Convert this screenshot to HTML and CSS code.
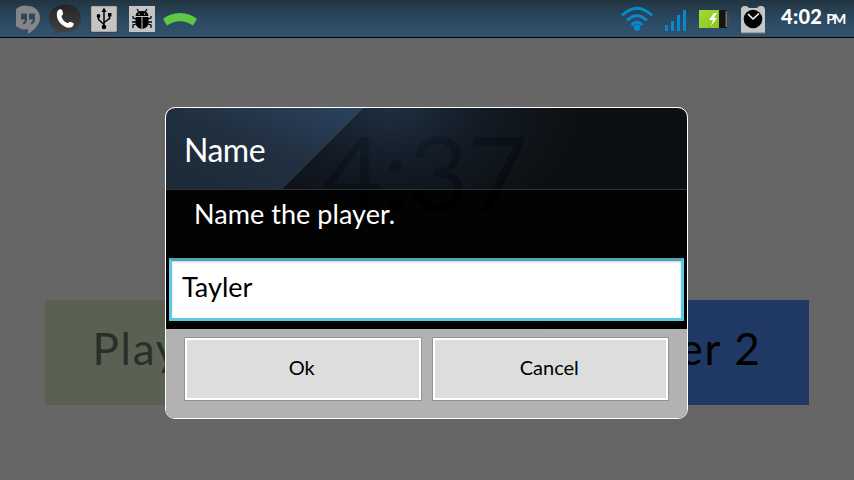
FILE: index.html
```html
<!DOCTYPE html>
<html lang="en">
<head>
<meta charset="utf-8">
<title>Game timer</title>
<link rel="stylesheet" href="styles.css">
</head>
<body>
<header class="status">
  <div class="notifications">
    <svg width="24" height="30" viewBox="0 0 24 30"><path d="M12 1a12 12 0 1 0 0 23v5c5-3 12-9 12-16C24 6 19 1 12 1z" fill="#858585"/><path d="M5 8.500h6v6q0 4-4 5v-2q2-1 2-3H5zm8 0h6v6q0 4-4 5v-2q2-1 2-3h-4z" fill="#30485d"/></svg>
    <svg class="talk" width="34" height="32" viewBox="0 0 34 32"><defs><linearGradient id="bubble" x2="0" y2="1"><stop stop-color="#242424"/><stop offset="1" stop-color="#444"/></linearGradient></defs><path d="M17 .5C7 .5 1 7 1 14.500c0 5 2 8 6 11L6 31l7-3.200c12 2 20-4 20-13.300C33 6 26 .5 17 .5z" fill="url(#bubble)"/><path d="M9.500 7c2-2.500 4-2.500 5 0l.6 3c0 1-2 1.500-1.500 3 1 3 3 5 5.500 6 1.500.3 2-1.500 3.400-1.300l3 1.600c1 1-.5 3.200-2 4-3.500 1.600-8.500-1-11.500-4.300C9 15.500 8 10 9.500 7z" fill="#fff"/></svg>
    <svg class="usb" width="28" height="28" viewBox="0 0 28 28"><rect x=".7" y=".7" width="26.600" height="26.600" rx="1.500" fill="#c4c4c4" stroke="#383838"/><path d="M14 5v17M8.500 11v3.500l5.500 5M19.500 9v4.500l-5.500 4" fill="none" stroke="#000" stroke-width="1.500"/><path d="M14 2.500 16.500 7h-5zM18 8h3.500v3.500H18z"/><circle cx="8.500" cy="11" r="1.900"/><circle cx="14" cy="22" r="2.300"/></svg>
    <svg class="bug" width="26" height="26" viewBox="0 0 26 26"><rect width="26" height="26" fill="#c4c4c4"/><path d="M6.500 10q.5-5 6.500-5t6.500 5zM6.500 11h6v12q-6-1.500-6-7zM13.500 11h6v5q0 5.500-6 7z"/><path d="m8 3 2 3m8-3-2 3M7 13l-3-1v-2m3 6H3m4 2-3 1v3m15-9 3-1v-2m-3 6h4m-4 2 3 1v3" fill="none" stroke="#000" stroke-width="1.300"/><path d="M9.500 7.500h1.200v1.200H9.500zm5.500 0h1.200v1.200H15z" fill="#ccc"/></svg>
    <svg class="call" width="34" height="14" viewBox="0 0 34 14"><path d="M0 7C9-1 25-1 34 7l-4 6.500Q17 5 4 13.500z" fill="#5fc944"/></svg>
  </div>
  <div class="indicators">
    <svg width="32" height="25" viewBox="0 0 32 25"><g fill="none" stroke="#0789ce" stroke-width="2.800"><path d="M1 9.500Q16-5 31 9.500M6 14.500q10-9.500 20 0M10.500 19q5.500-5.500 11 0"/></g><circle cx="16" cy="21.500" r="3.200" fill="#0789ce"/></svg>
    <svg class="signal" width="22" height="22" viewBox="0 0 22 22"><path d="M0 15h3v6H0zm6-4h3v10H6zm6-6h3v16h-3zm6-5h3v21h-3z" fill="#0789ce"/></svg>
    <svg class="battery" width="30" height="18" viewBox="0 0 30 18"><defs><linearGradient id="charge" x2="1" y2="1"><stop stop-color="#a7d936"/><stop offset="1" stop-color="#8bc51d"/></linearGradient></defs><path d="M0 0h20v18H0z" fill="url(#charge)"/><path d="M20 0h8v18h-8z" fill="#151515"/><path d="M26.500 1H28v16h-1.500z" fill="#707070"/><path d="M28 4h2v10h-2z" fill="#484848"/><path d="m15 3-5 7h4l-2 6 6-8h-3l3-5z" fill="#fff"/></svg>
    <svg class="alarm" width="24" height="28" viewBox="0 0 24 28"><path d="M0 27V4q0-4 4-4 3 0 4 2h8q1-2 4-2 4 0 4 4v23z" fill="#c6c6c6"/><path d="M0 27h24" stroke="#777"/><circle cx="12" cy="13" r="9.300"/><path d="m7 8 5 5 6-5.500" fill="none" stroke="#fff" stroke-width="1.600"/></svg>
    <div class="clock">4:02<span>PM</span></div>
  </div>
</header>
<main class="game">
  <div class="timer">4:37</div>
  <div class="players">
    <div class="player first">Player 1</div>
    <div class="player second">Player 2</div>
  </div>
</main>
<div class="overlay">
  <section class="dialog">
    <svg class="shine" viewBox="0 0 521 81" preserveAspectRatio="none"><defs>
      <linearGradient id="blue" x1="0" y1="1" x2="1" y2="0"><stop stop-color="#182634"/><stop offset=".5" stop-color="#1d2d3e"/><stop offset="1" stop-color="#28405f"/></linearGradient>
      <radialGradient id="glow" gradientUnits="userSpaceOnUse" cx="225" cy="0" r="190" gradientTransform="matrix(1 0 0 .65 0 0)"><stop stop-color="#1a2b3e"/><stop offset=".5" stop-color="#0d151f"/><stop offset="1" stop-color="#070a0d"/></radialGradient></defs>
      <path d="M0 0h197L116 81H0z" fill="url(#blue)" opacity=".95"/><path d="M197 0h324v81H116z" fill="url(#glow)" opacity=".94"/></svg>
    <h1>Name</h1>
    <div class="content"><p>Name the player.</p><div class="field"><span>Tayler</span></div></div>
    <div class="actions"><button class="ok"><span>Ok</span></button><button class="cancel"><span>Cancel</span></button></div>
  </section>
</div>
</body>
</html>
```
FILE: styles.css
```css
* { box-sizing: border-box; }
body { margin: 0; width: 854px; height: 480px; overflow: hidden; background: #666; font-family: Lato, "Open Sans", sans-serif; }
svg { display: block; flex: none; }
.status { height: 38px; display: flex; justify-content: space-between; background: linear-gradient(#213541, #2b4860 50%, #325270); border-bottom: 1px solid #000; }
.notifications, .indicators { display: flex; align-items: flex-start; }
.notifications { padding: 5px 0 0 16px; }
.talk { margin: -1px 0 0 8px; }
.usb { margin-left: 8px; }
.bug { margin: 1px 0 0 11px; }
.call { margin: 7px 0 0 8px; }
.indicators { padding: 6px 9px 0 0; }
.signal { margin: 4px 0 0 12px; }
.battery { margin: 4px 0 0 12px; }
.alarm { margin-left: 12px; }
.clock { display: flex; align-items: baseline; width: 64px; margin: -2px 0 0 16px; color: #fff; font-size: 20px; font-weight: 900; line-height: 24px; letter-spacing: .3px; white-space: nowrap; }
.clock span { margin-left: 4px; font-size: 14px; font-weight: 700; letter-spacing: -1.8px; }
.game { height: 442px; padding: 71px 45px 0; }
.timer { height: 124px; padding-right: 3px; font-size: 103px; line-height: 124px; text-align: center; color: #000; }
.players { display: flex; justify-content: space-between; margin-top: 67px; }
.player { width: 264px; height: 105px; line-height: 97px; text-align: center; font-size: 44px; letter-spacing: 1.7px; }
.first { background: #596153; color: #2b2e28; }
.second { background: #1f3864; color: #000; }
.overlay { position: absolute; z-index: 1; inset: 107px 166px 61px 165px; }
.dialog { position: relative; height: 312px; display: flex; flex-direction: column; overflow: hidden; border: 1px solid #fff; border-radius: 10px; }
.shine { position: absolute; z-index: -1; top: 0; left: 0; width: 521px; height: 81px; }
h1 { flex: none; height: 82px; margin: 0; padding-left: 18px; border-bottom: 1px solid #303336; color: #fff; font-size: 32px; font-weight: 400; line-height: 84px; letter-spacing: -.5px; }
.content { height: 139px; padding: 8px 3px 0; background: rgba(0, 0, 0, .97); }
.content p { height: 60px; margin: 0; padding-left: 25px; color: #fff; font-size: 27px; line-height: 32px; letter-spacing: .05px; }
.field { height: 63px; padding-left: 10px; border: 3px solid #5bcbe5; border-top-color: #4aa5b8; background: #fff; box-shadow: inset 0 1px 2px #ccc; color: #000; font-size: 27px; line-height: 51px; }
.actions { flex: 1; display: flex; gap: 10px; padding: 8px 18px 17px; background: #b2b2b2; }
button { flex: 1; height: 64px; padding: 0 2px 5px 0; border: 1px solid #939393; background: #ddd; box-shadow: inset 0 0 0 2px #fff; color: #000; font: 20px Lato, sans-serif; }
```
